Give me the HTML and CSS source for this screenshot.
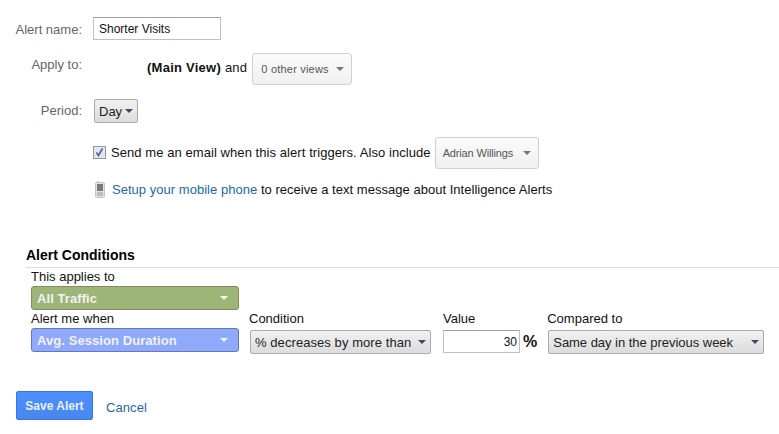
FILE: index.html
```html
<!DOCTYPE html>
<html lang="en">

<head>
    <title>Alert</title>
    <meta charset="utf-8">
    <link rel="stylesheet" href="styles.css">
</head>

<body>
    <form class="settings">
        <div class="row row-name">
            <label class="label">Alert name:</label>
            <input class="name-input" type="text" value="Shorter Visits">
        </div>
        <div class="row row-apply">
            <label class="label">Apply to:</label>
            <div class="apply-value">
                <span class="apply-text"><strong>(Main View)</strong> and</span>
                <button type="button" class="soft-btn views-btn">0 other views<i class="caret caret-grey"></i></button>
            </div>
        </div>
        <div class="row row-period">
            <label class="label">Period:</label>
            <button type="button" class="grey-btn period-btn">Day<i class="caret caret-navy"></i></button>
        </div>
        <div class="row row-email">
            <span class="checkbox">
                <svg width="9" height="9" viewBox="0 0 9 9"><path d="M1.5 4.5 L3.5 7.5 L7.5 0.5" fill="none" stroke="#4a5cae" stroke-width="1.6"/></svg>
            </span>
            <span class="email-text">Send me an email when this alert triggers. Also include</span>
            <button type="button" class="soft-btn person-btn">Adrian Willings<i class="caret caret-grey"></i></button>
        </div>
        <div class="row row-phone">
            <svg class="phone" width="10" height="17" viewBox="0 0 10 17">
                <rect x="0.5" y="1.5" width="9" height="15" rx="1" fill="#e2e2e2" stroke="#c4c4c4"/>
                <rect x="2" y="0" width="2" height="2" fill="#c8c8c8"/>
                <rect x="2" y="3" width="6" height="7" fill="#7a7a7a"/>
                <rect x="2" y="11" width="6" height="4" fill="#bcbcbc"/>
            </svg>
            <span class="phone-text"><a href="#">Setup your mobile phone</a> to receive a text message about Intelligence Alerts</span>
        </div>
    </form>

    <section class="conditions">
        <h2 class="conditions-title">Alert Conditions</h2>
        <div class="conditions-body">
            <div class="field">
                <span class="field-label">This applies to</span>
                <button type="button" class="pill pill-green">All Traffic<i class="caret caret-white"></i></button>
            </div>
            <div class="field-row">
                <div class="field">
                    <span class="field-label">Alert me when</span>
                    <button type="button" class="pill pill-blue">Avg. Session Duration<i class="caret caret-white"></i></button>
                </div>
                <div class="field field-condition">
                    <span class="field-label">Condition</span>
                    <button type="button" class="grey-btn select-btn condition-btn">% decreases by more than<i class="caret caret-navy"></i></button>
                </div>
                <div class="field field-value">
                    <span class="field-label">Value</span>
                    <div class="value-wrap">
                        <input class="value-input" type="text" value="30">
                        <b class="percent">%</b>
                    </div>
                </div>
                <div class="field field-compare">
                    <span class="field-label">Compared to</span>
                    <button type="button" class="grey-btn select-btn compare-btn">Same day in the previous week<i class="caret caret-navy"></i></button>
                </div>
            </div>
        </div>
    </section>

    <div class="actions">
        <button type="button" class="save-btn">Save Alert</button>
        <a href="#" class="cancel">Cancel</a>
    </div>
</body>

</html>
```

FILE: styles.css
```css
* {
    box-sizing: border-box;
}

body {
    margin: 0;
    height: 434px;
    overflow: hidden;
    font-family: "Liberation Sans", Arial, sans-serif;
    font-size: 13px;
    letter-spacing: 0.07px;
    color: #111;
    background: white;
}

a {
    color: #1b6aa5;
    text-decoration: none;
}

button {
    margin: 0;
    font-family: inherit;
    letter-spacing: inherit;
}

.settings {
    padding-top: 17px;
}

/* Top form rows */
.row {
    display: flex;
    align-items: flex-start;
}

.label {
    width: 82px;
    flex: none;
    text-align: right;
    color: #666;
    font-size: 13px;
    letter-spacing: 0;
}

.row-name .label {
    padding-top: 5px;
}

.name-input {
    width: 128px;
    height: 23px;
    margin-left: 11px;
    padding: 0 5px;
    border: 1px solid #c0c0c0;
    border-top-color: #a0a0a0;
    font-family: inherit;
    font-size: 12px;
    color: #111;
}

.row-apply {
    margin-top: 13px;
}

.row-apply .label {
    padding-top: 4px;
}

.apply-value {
    display: flex;
    margin-left: 65px;
}

.apply-text {
    padding-top: 7px;
    letter-spacing: 0.25px;
}

.soft-btn {
    display: flex;
    align-items: center;
    justify-content: space-between;
    height: 32px;
    padding: 0 7px 0 8px;
    border: 1px solid #d0d0d0;
    border-radius: 3px;
    background: linear-gradient(#fbfbfb, #f0f0f0);
    font-size: 11px;
    color: #555;
}

.views-btn {
    width: 100px;
    margin-left: 5px;
    letter-spacing: 0.2px;
}

.row-period {
    margin-top: 14px;
}

.row-period .label {
    padding-top: 4px;
}

.grey-btn {
    display: flex;
    align-items: center;
    border: 1px solid #aaa;
    border-radius: 2px;
    background: linear-gradient(#f1f1f1, #dcdcdc);
    color: #222;
}

.period-btn {
    width: 44px;
    height: 24px;
    margin-left: 12px;
    padding: 0 4px;
    font-size: 13px;
    letter-spacing: 0;
    gap: 3px;
}

.row-email {
    margin-top: 14px;
    padding-left: 93px;
    align-items: center;
}

.checkbox {
    display: flex;
    align-items: center;
    justify-content: center;
    width: 13px;
    height: 13px;
    margin-top: -2px;
    border: 1px solid #999;
    background: #e2e6f0;
}

.email-text {
    margin-left: 5px;
    margin-top: -2px;
}

.person-btn {
    width: 104px;
    margin-left: 4px;
    padding-left: 7px;
    letter-spacing: -0.15px;
}

.row-phone {
    margin-top: 12px;
    padding-left: 95px;
    align-items: center;
}

.phone-text {
    margin-left: 7px;
    letter-spacing: 0.03px;
}

/* Conditions block */
.conditions {
    margin-top: 49px;
    margin-left: 26px;
}

.conditions-title {
    margin: 0;
    height: 21px;
    border-bottom: 1px solid #ddd;
    font-size: 14px;
    line-height: 17px;
    letter-spacing: 0;
    color: #000;
}

.conditions-body {
    padding-left: 5px;
}

.field {
    display: flex;
    flex-direction: column;
}

.field-label {
    height: 18px;
    line-height: 17px;
    letter-spacing: 0;
}

.field-row {
    display: flex;
}

.pill {
    display: flex;
    align-items: center;
    justify-content: space-between;
    width: 208px;
    height: 24px;
    padding: 0 10px 0 5px;
    border-radius: 3px;
    border: 1px solid;
    font-size: 13px;
    font-weight: bold;
    color: #f2f2f2;
}

.pill-green {
    border-color: #7d8f5c;
    background: #9db576;
}

.pill-blue {
    border-color: #6578bd;
    background: #8fa9fb;
}

.field-condition {
    margin-left: 10px;
}

.field-value {
    margin-left: 12px;
}

.field-compare {
    margin-left: 10px;
}

.select-btn {
    justify-content: space-between;
    height: 24px;
    margin-top: 2px;
    margin-left: 1px;
    padding: 0 4px 0 4px;
    font-size: 13px;
}

.condition-btn {
    width: 181px;
}

.compare-btn {
    width: 216px;
    letter-spacing: -0.03px;
}

.value-wrap {
    display: flex;
    align-items: center;
    margin-top: 2px;
}

.value-input {
    width: 77px;
    height: 23px;
    padding: 0 2px 0 1px;
    border: 1px solid #c0c0c0;
    border-top-color: #a0a0a0;
    text-align: right;
    font-family: inherit;
    font-size: 12px;
    color: #111;
}

.percent {
    margin-left: 3px;
    font-size: 16px;
    letter-spacing: 0;
}

/* Carets */
.caret {
    width: 0;
    height: 0;
    border-left: 4px solid transparent;
    border-right: 4px solid transparent;
    border-top: 4px solid #333;
}

.caret-grey {
    border-top-color: #777;
}

.caret-navy {
    border-top-color: #3b4a6b;
}

.caret-white {
    border-top-color: #f4f4f4;
}

/* Bottom buttons */
.actions {
    display: flex;
    align-items: center;
    margin-top: 37px;
    padding-left: 16px;
}

.save-btn {
    width: 77px;
    height: 29px;
    border: 1px solid #3079ed;
    border-radius: 2px;
    background: linear-gradient(#4d90fe, #4787ed);
    color: #e8f0ff;
    font-size: 12px;
    font-weight: bold;
    letter-spacing: 0;
}

.cancel {
    margin-left: 13px;
    padding-top: 4px;
}
```
